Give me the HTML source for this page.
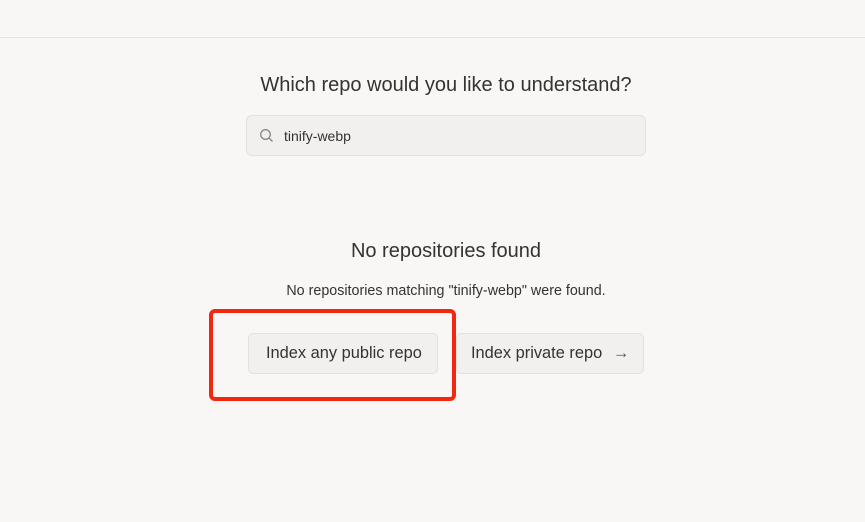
<!DOCTYPE html>
<html><head><style>
body{margin:0;width:865px;height:522px;background:#f8f7f5;font-family:"Liberation Sans",sans-serif;position:relative;overflow:hidden;color:#2b2b2b}
.line{position:absolute;top:37px;left:0;width:865px;height:1px;background:#e6e4e0}
.t{position:absolute;left:0;width:892px;text-align:center}
.search{position:absolute;left:246px;top:115px;width:400px;height:41px;border:1px solid #e3e1dd;border-radius:6px;background:#f1f0ee;box-sizing:border-box}
.btn{position:absolute;top:333px;height:41px;border:1px solid #e3e1dd;border-radius:5px;background:#f1f0ee;box-sizing:border-box;font-size:16.4px;line-height:39px;color:#333}
.red{position:absolute;left:209px;top:309px;width:247px;height:92px;border:4px solid #f2270f;border-radius:6px;box-sizing:border-box}
</style></head><body>
<div class="line"></div>
<div class="t" style="top:74px;font-size:20px;color:#333">Which repo would you like to understand?</div>
<div class="search">
<svg style="position:absolute;left:12px;top:12px" width="15" height="15" viewBox="0 0 15 15"><circle cx="6.5" cy="6.5" r="4.8" fill="none" stroke="#888" stroke-width="1.3"/><line x1="10" y1="10" x2="13.5" y2="13.5" stroke="#888" stroke-width="1.3"/></svg>
<span style="position:absolute;left:37px;top:12px;font-size:14px;color:#333">tinify-webp</span></div>
<div class="t" style="top:240px;font-size:20px;color:#333">No repositories found</div>
<div class="t" style="top:283px;font-size:14.3px;color:#333">No repositories matching "tinify-webp" were found.</div>
<div class="btn" style="left:248px;width:190px"><span style="position:absolute;left:17px">Index any public repo</span></div>
<div class="btn" style="left:456px;width:188px"><span style="position:absolute;left:14px">Index private repo</span><span style="position:absolute;left:156px;color:#555">→</span></div>
<div class="red"></div>
</body></html>
